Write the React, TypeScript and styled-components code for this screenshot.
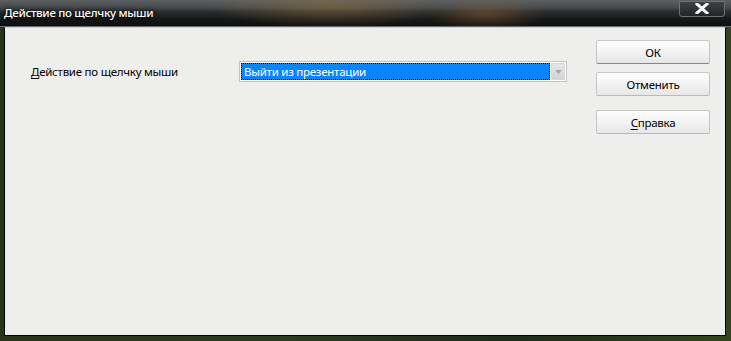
import styled, { createGlobalStyle } from "styled-components"

const Global = createGlobalStyle`
    html, body {
        margin: 0;
        padding: 0;
        background: #1e2418;
        overflow: hidden;
    }
    * { box-sizing: border-box; }
`

const Frame = styled.div`
    width: 731px;
    height: 341px;
    display: flex;
    flex-direction: column;
    background: linear-gradient(90deg, #28331c 0%, #2d3a22 40%, #1f2a1a 70%, #34441f 100%);
    font-family: "Noto Sans", "Open Sans", sans-serif;
    font-size: 11.5px;
    letter-spacing: -0.25px;
`

const TitleBar = styled.div`
    height: 27px;
    flex: none;
    display: flex;
    align-items: center;
    justify-content: space-between;
    padding: 0 5px 2px 4px;
    background:
        radial-gradient(ellipse 120px 22px at 330px 6px, rgba(140, 110, 60, 0.55), rgba(140, 110, 60, 0) 100%),
        radial-gradient(ellipse 60px 18px at 485px 14px, rgba(150, 100, 50, 0.45), rgba(150, 100, 50, 0) 100%),
        linear-gradient(180deg, #5d6164 0%, #45494c 30%, #2a2d2f 45%, #161718 75%, #0e0f10 100%);
    border-bottom: 1px solid #6b6e70;
`

const Title = styled.span`
    color: #fff;
    font-size: 11.5px;
    font-weight: 500;
    letter-spacing: -0.3px;
    text-shadow: 0 0 6px rgba(0, 0, 0, 0.9), 0 0 2px rgba(0, 0, 0, 0.8);
`

const CloseButton = styled.div`
    width: 46px;
    height: 16px;
    margin-top: -7px;
    margin-right: 1px;
    border: 1px solid #6f7275;
    border-radius: 0 0 3px 3px;
    background: linear-gradient(180deg, #3e4144 0%, #232527 100%);
    display: flex;
    align-items: center;
    justify-content: center;
    svg { display: block; }
`

const Client = styled.div`
    flex: 1;
    margin: 0 5px 5px 4px;
    background: #eeeeec;
    border: 1px solid #000;
    border-top: 1px solid #cfd0d0;
    display: flex;
    padding: 12px 15px 0 26px;
`

const Content = styled.div`
    flex: 1;
    padding-top: 21px;
`

const Row = styled.div`
    display: flex;
    align-items: center;
    height: 21px;
`

const Label = styled.span`
    width: 208px;
    color: #000;
    u { text-decoration: underline; text-underline-offset: 2px; }
`

const Select = styled.div`
    width: 328px;
    height: 21px;
    border: 1px solid #c2c2c2;
    background: #fff;
    display: flex;
    padding: 1px;
`

const Selected = styled.div`
    flex: 1;
    background: #0a84ff;
    color: #fff;
    outline: 1px dotted #000;
    outline-offset: -1px;
    padding-left: 3px;
    display: flex;
    align-items: center;
    line-height: 1;
`

const Arrow = styled.div`
    width: 14px;
    margin-left: 1px;
    background: linear-gradient(180deg, #e6e6e6 0%, #d2d2d2 100%);
    border: 1px solid #d9d9d9;
    display: flex;
    align-items: center;
    justify-content: center;
`

const Buttons = styled.div`
    width: 114px;
    display: flex;
    flex-direction: column;
`

const Button = styled.div<{ $default?: boolean; $gap: number }>`
    height: 24px;
    margin-top: ${p => p.$gap}px;
    border: 1px solid #c5c5c5;
    border-bottom-color: ${p => (p.$default ? "#5d8fc4" : "#b9b9b9")};
    border-radius: 2px;
    background: linear-gradient(180deg, #fdfdfd 0%, #f3f3f3 50%, #e6e6e6 100%);
    display: flex;
    align-items: center;
    justify-content: center;
    color: #000;
    u { text-decoration: underline; text-underline-offset: 2px; }
`

export default function App() {
    return (
        <>
            <Global />
            <Frame>
                <TitleBar>
                    <Title>Действие по щелчку мыши</Title>
                    <CloseButton>
                        <svg width="14" height="11" viewBox="0 0 14 11">
                            <path d="M2 1 L12 10 M12 1 L2 10" stroke="#fff" strokeWidth="3" strokeLinecap="square" />
                        </svg>
                    </CloseButton>
                </TitleBar>
                <Client>
                    <Content>
                        <Row>
                            <Label><u>Д</u>ействие по щелчку мыши</Label>
                            <Select>
                                <Selected>Выйти из презентации</Selected>
                                <Arrow>
                                    <svg width="7" height="4" viewBox="0 0 7 4">
                                        <path d="M0 0 H7 L3.5 4 Z" fill="#a8a8a8" />
                                    </svg>
                                </Arrow>
                            </Select>
                        </Row>
                    </Content>
                    <Buttons>
                        <Button $default $gap={0}>ОК</Button>
                        <Button $gap={8}>Отменить</Button>
                        <Button $gap={14}><span><u>С</u>правка</span></Button>
                    </Buttons>
                </Client>
            </Frame>
        </>
    )
}
